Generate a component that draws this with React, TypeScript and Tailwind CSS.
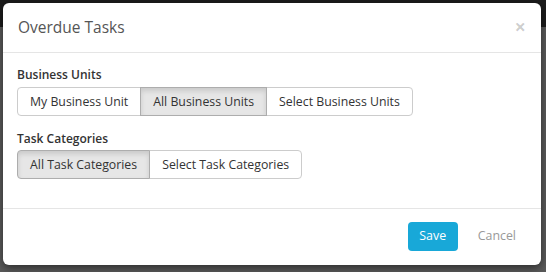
import React from 'react';

const font = { fontFamily: '"Open Sans", "Noto Sans", sans-serif' };

interface Option {
  label: string;
  active?: boolean;
}

const ButtonGroup: React.FC<{ options: Option[] }> = ({ options }) => {
  return (
    <div className="inline-flex">
      {options.map((o, i) => (
        <button
          key={o.label}
          className={
            'h-[29px] px-[12px] text-[12.3px] leading-[17px] text-[#333] border ' +
            (i > 0 ? '-ml-px ' : '') +
            (i === 0 ? 'rounded-l-[4px] ' : '') +
            (i === options.length - 1 ? 'rounded-r-[4px] ' : '') +
            (o.active
              ? 'bg-[#e6e6e6] border-[#adadad] shadow-[inset_0_3px_5px_rgba(0,0,0,0.125)] relative z-10'
              : 'bg-white border-[#ccc]')
          }
        >
          {o.label}
        </button>
      ))}
    </div>
  );
};

export default function App() {
  return (
    <div className="relative w-[546px] h-[272px] overflow-hidden bg-[#5a5a5a]" style={font}>
      <div className="h-[27px] bg-[#1c1c1c]"></div>

      <div className="absolute left-[3px] top-[3px] w-[538px] h-[262px] bg-white rounded-[6px] shadow-[0_3px_9px_rgba(0,0,0,0.5)] flex flex-col">
        <div className="h-[50px] flex items-center justify-between pl-[15px] pr-[15px] border-b border-[#e5e5e5]">
          <h4 className="text-[15.5px] text-[#555] leading-none mt-[1px]">Overdue Tasks</h4>
          <span className="text-[20px] font-bold leading-none text-black/20 -mt-[2px]">×</span>
        </div>

        <div className="pl-[14px] pt-[13px] h-[155px]">
          <div className="text-[12px] leading-[18px] font-semibold text-[#333] mb-[3px]">Business Units</div>
          <ButtonGroup
            options={[
              { label: 'My Business Unit' },
              { label: 'All Business Units', active: true },
              { label: 'Select Business Units' },
            ]}
          />
          <div className="text-[12px] leading-[18px] font-semibold text-[#333] mt-[14px] mb-[2px]">Task Categories</div>
          <ButtonGroup
            options={[
              { label: 'All Task Categories', active: true },
              { label: 'Select Task Categories' },
            ]}
          />
        </div>

        <div className="border-t border-[#e5e5e5] flex-1 flex justify-end items-start pt-[13px] pr-[13px]">
          <button className="h-[29px] w-[50px] rounded-[4px] bg-[#18a8d8] text-white text-[12.4px]">Save</button>
          <button className="h-[29px] px-[12px] ml-[8px] text-[12.4px] text-[#999]">Cancel</button>
        </div>
      </div>
    </div>
  );
}
